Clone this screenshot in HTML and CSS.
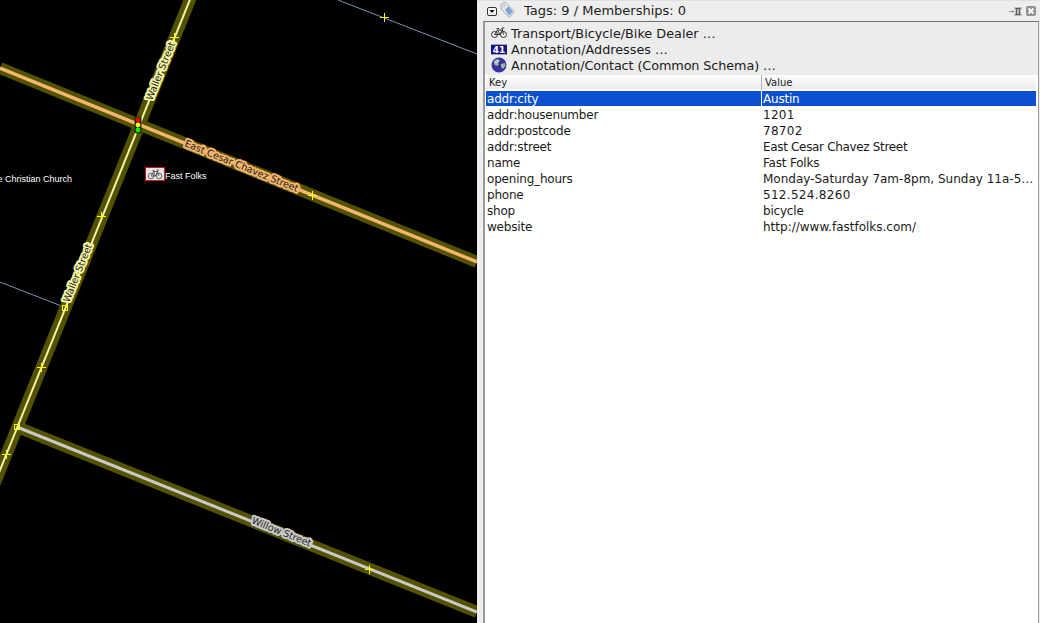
FILE: index.html
```html
<!DOCTYPE html>
<html lang="en">
<head>
<meta charset="utf-8">
<title>Tags: 9 / Memberships: 0</title>
<link rel="stylesheet" href="styles.css">
</head>
<body>
<div class="app">
  <svg class="map" width="477" height="623" viewBox="0 0 477 623" xmlns="http://www.w3.org/2000/svg">
    <g class="way-thin">
      <line x1="338" y1="0" x2="477" y2="54"/>
      <line x1="0" y1="282" x2="64" y2="307"/>
    </g>
    <g class="casing">
      <line x1="0" y1="68" x2="477" y2="262"/>
      <line x1="17" y1="427" x2="477" y2="612"/>
      <line x1="191" y1="-3" x2="-8" y2="490"/>
    </g>
    <line class="road-orange" x1="0" y1="68" x2="477" y2="262"/>
    <line class="road-grey" x1="17" y1="427" x2="477" y2="612"/>
    <line class="road-yellow" x1="191" y1="-3" x2="-8" y2="490"/>

    <text class="label label-yellow" transform="translate(152 101) rotate(-68)">Waller Street</text>
    <text class="label label-yellow" transform="translate(69 303) rotate(-68)">Waller Street</text>
    <text class="label label-orange" transform="translate(184 146) rotate(22.2)">East Cesar Chavez Street</text>
    <text class="label label-grey" transform="translate(251 523) rotate(22)">Willow Street</text>
    <text class="poi" x="-2.500" y="182">e Christian Church</text>
    <text class="poi" x="165" y="179">Fast Folks</text>

    <g class="node-plus">
      <path d="M170 37.500h9M174.500 33v9"/>
      <path d="M380 17.500h9M384.500 13v9"/>
      <path d="M97 216.500h9M101.500 212v9"/>
      <path d="M37 367.500h9M41.500 363v9"/>
      <path d="M2 454.500h9M6.500 450v9"/>
      <path d="M308 195.500h9M312.500 191v9"/>
      <path d="M365 569.500h9M369.500 565v9"/>
    </g>
    <rect class="node-box" x="62.500" y="305.500" width="5" height="5"/>
    <rect class="node-box" x="14.500" y="424.500" width="5" height="5"/>

    <rect class="lamp-body" x="135" y="117" width="6" height="16" rx="1"/>
    <circle cx="138" cy="120" r="2.400" fill="#ff0000"/>
    <circle cx="138" cy="125" r="2.400" fill="#ffff00"/>
    <circle cx="138" cy="130" r="2.400" fill="#00ff00"/>

    <rect class="poi-frame" x="145.500" y="167.500" width="19" height="13"/>
    <g class="poi-bike">
      <circle cx="151" cy="176" r="2.800"/>
      <circle cx="159" cy="176" r="2.800"/>
      <path d="M151 176l2.500-4.500h4l1.500 4.500M153.500 171.500l2 4.500h-4.500M155.500 176l2-4.500M152.500 170.500h2M157.500 171.500l-.5-1.500h2"/>
    </g>
  </svg>

  <section class="dialog">
    <header class="title-bar">
      <svg class="collapse" width="10" height="9" viewBox="0 0 10 9" xmlns="http://www.w3.org/2000/svg">
        <rect x=".5" y=".5" width="9" height="8" rx="1.500" fill="#f6f6f6" stroke="#333"/>
        <path d="M2.500 3h5l-2.500 3z" fill="#111"/>
      </svg>
      <svg class="tag-icon" width="15" height="16" viewBox="0 0 15 16" xmlns="http://www.w3.org/2000/svg">
        <path d="M.5 3l2.500-2.500 3.500.5 8 8.500-5 6-8-8z" fill="#e2e5ea" stroke="#a9aeb6"/>
        <path d="M5 7.500l3.500-3 4.500 5-4 4z" fill="#7ea3cf"/>
        <circle cx="3.500" cy="3.500" r="1" fill="#fff" stroke="#8d929a" stroke-width=".6"/>
      </svg>
      <span class="title">Tags: 9 / Memberships: 0</span>
      <svg class="pin" width="14" height="9" viewBox="0 0 14 9" xmlns="http://www.w3.org/2000/svg">
        <path d="M0 4.500l6-1v2z" fill="#8a8a8a"/>
        <path d="M6 0h8v1.500l-1 1v4l1 1v1.500h-8v-1.500l1-1v-4l-1-1z" fill="#bdbdbd"/>
        <path d="M7.500 1.500h5M7.500 7.500h5M8.500 2v5M11.500 2v5" stroke="#5a5a5a" fill="none"/>
      </svg>
      <svg class="close" width="10" height="10" viewBox="0 0 10 10" xmlns="http://www.w3.org/2000/svg">
        <rect width="10" height="10" rx="2" fill="#8f8f8f"/>
        <path d="M2.500 2.500l5 5M7.500 2.500l-5 5" stroke="#fff" stroke-width="2"/>
      </svg>
    </header>
    <div class="pane">
      <ul class="presets">
        <li class="preset">
          <svg width="16" height="12" viewBox="0 0 16 12" xmlns="http://www.w3.org/2000/svg" class="ico-bike">
            <circle cx="3.500" cy="7.500" r="3"/><circle cx="12.500" cy="7.500" r="3"/>
            <path d="M3.500 7.500l3-4.500h5l1 4.500M6.500 3l2.500 4.500h-5.500M9 7.500l2.500-4.500M5.500 1.500h2.500M11.500 3l-.5-2h2.500"/>
          </svg>
          <span>Transport/Bicycle/Bike Dealer …</span>
        </li>
        <li class="preset">
          <svg width="16" height="11" viewBox="0 0 16 11" xmlns="http://www.w3.org/2000/svg">
            <rect width="16" height="11" fill="#14167e"/>
            <path d="M0 .500h16M0 10.500h16" stroke="#9a9cd0"/>
            <text class="shield" x="8" y="9">41</text>
          </svg>
          <span>Annotation/Addresses …</span>
        </li>
        <li class="preset">
          <svg width="16" height="16" viewBox="0 0 16 16" xmlns="http://www.w3.org/2000/svg">
            <circle cx="8" cy="8" r="7.500" fill="#3d2f9c"/>
            <path d="M3 4.500l4-2.500 2 2-2 2 1 2-3 1-2-2zM10 7l4-1 .5 3-2.500 3-2-2z" fill="#8fbf9a"/>
            <circle cx="5.500" cy="4.500" r="2" fill="#cfd4ef" opacity=".7"/>
          </svg>
          <span class="tight">Annotation/Contact (Common Schema) …</span>
        </li>
      </ul>
      <table class="tags">
        <thead>
          <tr><th class="col-key">Key</th><th>Value</th></tr>
        </thead>
        <tbody>
          <tr class="selected"><td>addr:city</td><td>Austin</td></tr>
          <tr><td>addr:housenumber</td><td class="num">1201</td></tr>
          <tr><td>addr:postcode</td><td class="num">78702</td></tr>
          <tr><td>addr:street</td><td class="narrow">East Cesar Chavez Street</td></tr>
          <tr><td>name</td><td>Fast Folks</td></tr>
          <tr><td>opening_hours</td><td class="wide">Monday-Saturday 7am-8pm, Sunday 11a-5…</td></tr>
          <tr><td>phone</td><td class="num">512.524.8260</td></tr>
          <tr><td>shop</td><td>bicycle</td></tr>
          <tr><td>website</td><td class="wide">http://www.fastfolks.com/</td></tr>
        </tbody>
      </table>
    </div>
  </section>
</div>
</body>
</html>
```
FILE: styles.css
```css
html, body {
  margin: 0;
  height: 100%;
  overflow: hidden;
}
body {
  font-family: "DejaVu Sans", sans-serif;
  font-size: 12px;
  color: #1a1a1a;
}
.app {
  display: flex;
  width: 1040px;
  height: 623px;
  background: #eeeeee;
}
.map {
  display: block;
  flex: none;
  background: #000;
}
.way-thin line {
  stroke: #7d8fb3;
  stroke-width: 1;
}
.casing line {
  stroke: #525200;
  stroke-width: 12;
}
.road-orange {
  stroke: #f5b56c;
  stroke-width: 3.500;
}
.road-grey {
  stroke: #c9c9c9;
  stroke-width: 3;
}
.road-yellow {
  stroke: #f4f4a2;
  stroke-width: 2;
}
.label {
  font-family: "DejaVu Sans", sans-serif;
  font-size: 9.600px;
  fill: #222;
  stroke-width: 4px;
  stroke-linejoin: round;
  paint-order: stroke;
}
.label-yellow { stroke: #f4f4a2; }
.label-orange { stroke: #f5b56c; }
.label-grey { stroke: #c9c9c9; }
.poi {
  font-family: "Liberation Sans", sans-serif;
  font-size: 9px;
  fill: #fff;
}
.node-plus path {
  fill: none;
  stroke: #ffff00;
  stroke-width: 1;
}
.node-box {
  fill: none;
  stroke: #ffff00;
  stroke-width: 1;
}
.lamp-body {
  fill: #111;
  stroke: #2f3a00;
  stroke-width: 1;
}
.poi-frame {
  fill: #e6e6e6;
  stroke: #d01818;
  stroke-width: 1;
}
.poi-bike circle,
.poi-bike path {
  fill: none;
  stroke: #444;
  stroke-width: .8;
}
.dialog {
  flex: 1;
  min-width: 0;
  display: flex;
  flex-direction: column;
  padding-left: 6px;
  padding-right: 1px;
  border-top: 1px solid #e0e0e0;
}
.title-bar {
  flex: none;
  height: 20px;
  display: flex;
  align-items: center;
  padding-left: 4px;
  color: #222;
}
.collapse { flex: none; margin-right: 3px; }
.tag-icon { flex: none; margin-right: 9px; margin-top: -3px; }
.title {
  flex: 1;
  font-size: 13px;
  margin-top: -2px;
}
.pin { flex: none; margin-right: 4px; }
.close { flex: none; margin-right: 3px; }
.pane {
  flex: 1;
  min-height: 0;
  display: flex;
  flex-direction: column;
  background: #fff;
  border-top: 1px solid #6e6e6e;
  border-left: 2px solid #9a9a9a;
  border-right: 1px solid #9a9a9a;
}
.presets {
  list-style: none;
  margin: 0;
  padding: 3px 0 0 6px;
  height: 50px;
  background: #ececec;
  font-size: 12.800px;
}
.preset {
  display: flex;
  align-items: center;
  gap: 4px;
  height: 16px;
}
.preset svg { flex: none; }
.tight { letter-spacing: -.1px; }
.ico-bike circle,
.ico-bike path {
  fill: none;
  stroke: #333;
  stroke-width: 1;
}
.shield {
  font-family: "DejaVu Sans", sans-serif;
  font-size: 9px;
  font-weight: 700;
  fill: #fff;
  text-anchor: middle;
}
.tags {
  width: 550px;
  margin-left: 1px;
  border-collapse: separate;
  border-spacing: 0;
  table-layout: fixed;
  background: #fff;
}
.tags th {
  height: 15px;
  padding: 0 0 1px 3px;
  font-size: 10px;
  font-weight: 400;
  text-align: left;
  color: #222;
  background: linear-gradient(#fdfdfd, #ececec 86%, #fff 86%);
  border-left: 1px solid #b8b8b8;
}
.tags th.col-key {
  width: 272px;
  border-left: 0;
}
.tags td {
  height: 14px;
  padding: 1px 0 0 1px;
  white-space: nowrap;
  overflow: hidden;
  line-height: 14px;
  border-bottom: 1px solid #fff;
  letter-spacing: -.2px;
}
.tags td + td { border-left: 1px solid transparent; }
.tags td.num { letter-spacing: .3px; }
.tags td.wide { letter-spacing: 0; }
.tags td.narrow { letter-spacing: -.33px; }
.selected td {
  background: #0b50cf;
  color: #fff;
}
.selected td + td { border-left-color: #fff; }
```
